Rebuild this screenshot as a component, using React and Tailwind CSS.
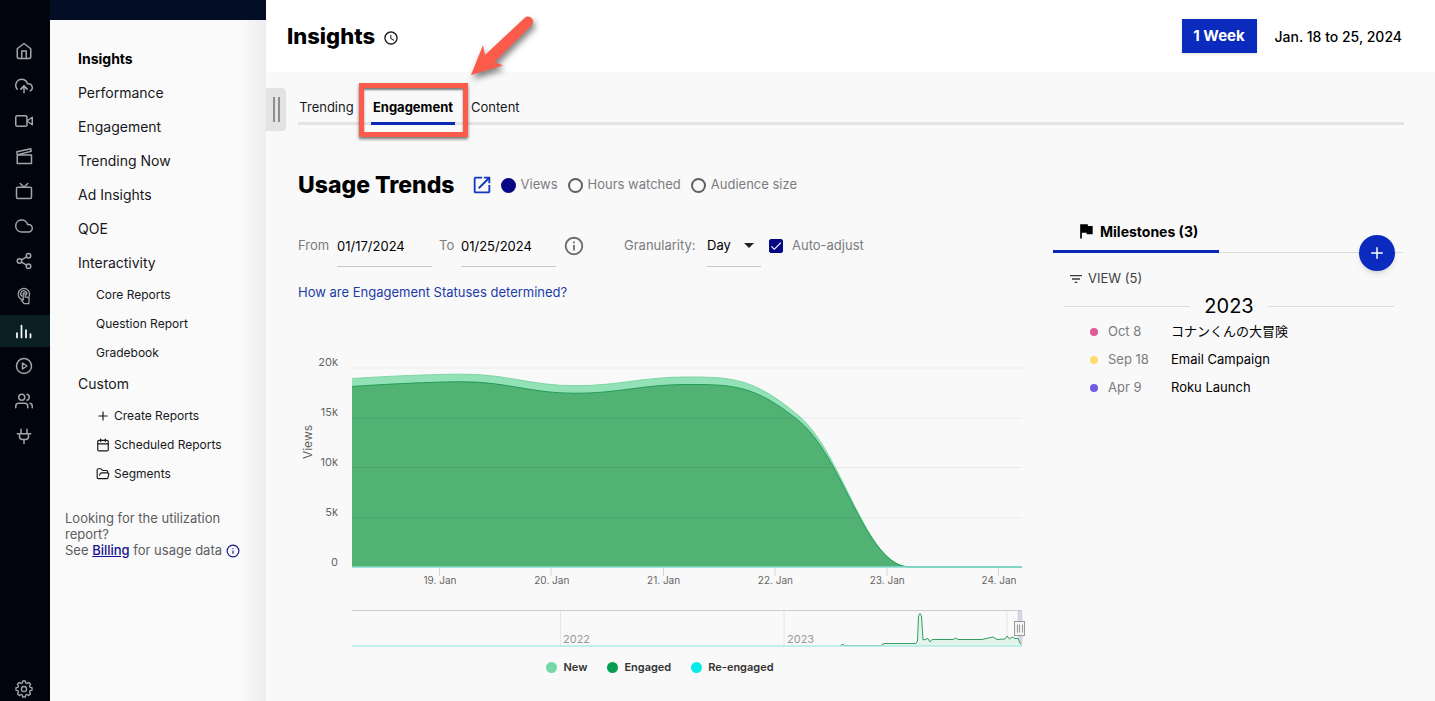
import React from "react";
import { FiHome, FiUploadCloud, FiVideo, FiTv, FiCloud, FiShare2, FiPlayCircle, FiUsers, FiPlus } from "react-icons/fi";
import { MdFlag, MdFilterList, MdOpenInNew, MdOutlineInfo, MdAccessTime, MdArrowDropDown, MdCheck } from "react-icons/md";
import { Calendar, FolderOpen, Info } from "lucide-react";

const stroke = { fill: "none", stroke: "currentColor", strokeWidth: 2, strokeLinecap: "round", strokeLinejoin: "round" };

const Clapper = () => (
  <svg viewBox="0 0 24 24" className="size-[18px]" {...stroke}>
    <path d="M3 10.5h19V22H3zM3 10.5 2.6 6.2 21 2.2l.6 3.4zM3 10.5 21.6 5.6" />
  </svg>
);

const Touch = () => (
  <svg viewBox="0 0 24 24" className="size-[18px]" {...stroke} strokeWidth={1.7}>
    <path d="M7.500 15.800A7.600 7.600 0 1 1 18.500 13.200" />
    <path d="M9.4 12.3a4 4 0 1 1 6-2" />
    <path d="M11 17.5V8.6a1.2 1.2 0 0 1 2.5 0v4.6l4 .9c1 .3 1.5.9 1.4 1.9l-.6 6.3h-6.2L8.6 17.8c-.5-1 .6-1.8 1.4-1.200z" />
  </svg>
);

const Bars = () => (
  <svg viewBox="0 0 18 18" className="size-[18px]" {...stroke} strokeWidth={1.7}>
    <path d="M2 11v4.500M6.500 3.500v12M11 8v7.500M15.500 12v3.500" />
  </svg>
);

const PlugIcon = () => (
  <svg viewBox="0 0 24 24" className="size-[18px]" {...stroke}>
    <path d="M8 3v6M16 3v6M3 9h18M6 9v3.500a4 4 0 0 0 4 4h4a4 4 0 0 0 4-4V9M12 16.500V22" />
  </svg>
);

const gearPath = (() => {
  const pts = [];
  for (let i = 0; i < 8; i++) {
    const c = (i * Math.PI) / 4;
    [[-0.27, 8.4], [-0.16, 10.8], [0.16, 10.8], [0.27, 8.4]].forEach(([a, r]) =>
      pts.push(`${(12 + r * Math.sin(c + a)).toFixed(2)} ${(12 - r * Math.cos(c + a)).toFixed(2)}`)
    );
  }
  return `M${pts.join("L")}Z`;
})();

const Gear = () => (
  <svg viewBox="0 0 24 24" className="size-[18px]" {...stroke} strokeWidth={1.8}>
    <path d={gearPath} />
    <circle cx="12" cy="12" r="3.400" />
  </svg>
);

const railItems = [
  ["Home", FiHome],
  ["Upload", FiUploadCloud],
  ["Record", FiVideo],
  ["Studio", Clapper],
  ["Live", FiTv],
  ["Cloud", FiCloud],
  ["Share", FiShare2],
  ["Interactivity", Touch],
  ["Insights", Bars],
  ["Players", FiPlayCircle],
  ["Users", FiUsers],
  ["Integrations", PlugIcon],
];

function Rail() {
  return (
    <nav aria-label="Primary" className="flex w-[50px] shrink-0 flex-col bg-[#01040c] pt-[35px] text-[#a3a5a9]">
      {railItems.map(([label, Icon]) => (
        <a
          key={label}
          href="#"
          aria-label={label}
          className={
            "mb-[3px] flex h-8 items-center justify-center pr-0.5 " +
            (label === "Insights" ? "bg-[#0a1f24] text-white" : "")
          }
        >
          <Icon className="size-[18px]" />
        </a>
      ))}
      <a href="#" aria-label="Settings" className="mt-auto mb-[3px] flex justify-center pr-0.5">
        <Gear />
      </a>
    </nav>
  );
}

function Sidebar() {
  return (
    <aside className="flex w-[216px] shrink-0 flex-col bg-[#fafafa]">
      <div className="h-5 bg-[#030d26]" />
      <div className="flex-1 bg-linear-to-r from-[#fafafa] from-88% to-[#ededef] pt-[21px] text-[14px] text-[#17181c]">
        <nav aria-label="Insights" className="flex flex-col pl-7">
          <a href="#" className="flex h-[34px] items-center font-bold text-black">Insights</a>
          {["Performance", "Engagement", "Trending Now", "Ad Insights", "QOE", "Interactivity"].map((t) => (
            <a key={t} href="#" className="flex h-[34px] items-center">{t}</a>
          ))}
          <div className="flex flex-col pt-px pl-[18px] text-[12px]">
            {["Core Reports", "Question Report", "Gradebook"].map((t) => (
              <a key={t} href="#" className="flex h-[29px] items-center">{t}</a>
            ))}
          </div>
          <a href="#" className="flex h-8 items-center">Custom</a>
          <div className="flex flex-col pt-0.5 pl-[18px] text-[12px]">
            <a href="#" className="flex h-[29px] items-center gap-1"><FiPlus className="size-3.5" />Create Reports</a>
            <a href="#" className="flex h-[29px] items-center gap-1"><Calendar className="size-3.5" />Scheduled Reports</a>
            <a href="#" className="flex h-[29px] items-center gap-1"><FolderOpen className="size-3.5" />Segments</a>
          </div>
        </nav>
        <p className="mt-[22px] pl-[15px] text-[13px] leading-4 text-[#5c5d60]">
          Looking for the utilization
          <br />
          report?
          <br />
          See <a href="#" className="font-medium text-[#14148c] underline">Billing</a> for usage data{" "}
          <Info className="inline size-3.5 text-[#14148c]" />
        </p>
      </div>
    </aside>
  );
}

function Callout() {
  return (
    <>
      <span className="pointer-events-none absolute -top-[5px] -right-[13px] -bottom-[15px] -left-3 border-5 border-[#fb5b4b] shadow-[0_2px_3px_rgba(0,0,0,0.55),inset_0_2px_2px_rgba(0,0,0,0.5)]" />
      <svg
        aria-hidden="true"
        viewBox="0 0 80 80"
        className="pointer-events-none absolute -top-[78px] left-[92px] size-20 drop-shadow-[2px_4px_3px_rgba(0,0,0,0.5)]"
      >
        <path d="M8 65 20 35 22 45 61.500 8A5 5 0 0 1 68.500 15.500L31.500 52 40 55.500Z" fill="#fb5b4b" />
      </svg>
    </>
  );
}

function Tabs() {
  return (
    <div className="flex items-start pt-4">
      <button aria-label="Toggle sidebar" className="flex h-[43px] w-5 items-center justify-center gap-[3px] rounded-r-sm bg-[#e3e3e3]">
        <span className="h-[25px] w-0.5 bg-[#8e8e8e]" />
        <span className="h-[25px] w-0.5 bg-[#8e8e8e]" />
      </button>
      <div role="tablist" className="mr-[31px] ml-3 flex h-[37px] flex-1 gap-4 border-b-3 border-[#e4e4e4] text-[13px]">
        <button role="tab" className="w-[57px] pt-[5px]">Trending</button>
        <button role="tab" aria-selected="true" className="relative -mb-[3px] w-[84px] border-b-3 border-[#0a28b4] pt-[5px] font-bold text-black">
          Engagement
          <Callout />
        </button>
        <button role="tab" className="pt-[5px]">Content</button>
      </div>
    </div>
  );
}

// Cubic smoothing through the samples: local extremes stay flat, other points share one tangent.
function spline(p) {
  let d = `M${p[0][0]} ${p[0][1]}`;
  let prev = p[0];
  for (let i = 1; i < p.length; i++) {
    const [x, y] = p[i];
    let left = [x, y];
    let right = [x, y];
    if (i < p.length - 1) {
      const [lx, ly] = p[i - 1];
      const [rx, ry] = p[i + 1];
      left = [(1.5 * x + lx) / 2.5, (1.5 * y + ly) / 2.5];
      right = [(1.5 * x + rx) / 2.5, (1.5 * y + ry) / 2.5];
      const fix = ((right[1] - left[1]) * (right[0] - x)) / (right[0] - left[0]) + y - right[1];
      left[1] += fix;
      right[1] += fix;
      if ((y - ly) * (ry - y) <= 0) {
        left[1] = y;
        right[1] = y;
      }
    }
    d += `C${prev[0]} ${prev[1]} ${left[0]} ${left[1]} ${x} ${y}`;
    prev = right;
  }
  return d;
}

const engaged = spline([[54, 36.5], [165, 31.8], [277, 43.3], [389, 34.5], [501, 71], [612, 217], [724, 217]]);
const fresh = spline([[54, 28.5], [165, 24.2], [277, 35.7], [389, 27], [501, 66], [612, 217], [724, 217]]);
const history =
  "M542 296 544 294.500 547 295.500H583L586 293.500H618L619.500 291 620.500 266 622 263.500 623.500 266 625 290 630 288.500 632 292 634 289.500H655L658 288 660 289.500H684L695 287 699 289.500 707 289 709 286 711.500 289 714 287 717 288.500H720L722.500 294";

function Chart() {
  return (
    <figure className="mt-12">
      <svg viewBox="0 0 728 300" role="img" aria-label="Views by day" className="-mr-1 block w-[calc(100%+4px)]">
        <path d={`${fresh}V217H54Z`} fill="#93e1b7" />
        <path d={fresh} fill="none" stroke="#7dd6a4" />
        <path d={`${engaged}V217H54Z`} fill="#51b274" />
        <path d={engaged} fill="none" stroke="#249b57" />
        <g stroke="#000" strokeOpacity="0.060">
          <path d="M54 18H724M54 68H724M54 117.500H724M54 168H724" />
        </g>
        <path d="M54 217H724" stroke="#86dad0" strokeWidth="1.500" />
        <path d="M141.500 218v8M253 218v8M365.500 218v8M477 218v8M589 218v8M700.500 218v8" stroke="#ccd6eb" />
        <g fill="#666" fontSize="11" textAnchor="end">
          {["20k", "15k", "10k", "5k", "0"].map((t, i) => (
            <text key={t} x="40" y={16 + i * 50}>{t}</text>
          ))}
        </g>
        <text transform="translate(13.500 92) rotate(-90)" textAnchor="middle" fontSize="12" fill="#666">Views</text>
        <g fill="#666" fontSize="10" textAnchor="middle">
          {[19, 20, 21, 22, 23, 24].map((day, i) => (
            <text key={day} x={142 + i * 111.8} y="234">{day}. Jan</text>
          ))}
        </g>
        <path d="M54 260.500H724" stroke="#ccc" />
        <path d="M262.500 261v35M486 261v35M709 261v35" stroke="#e6e6e6" />
        <path d="M720 261H724V296H720Z" fill="#d3d6e6" stroke="#c6c8d2" strokeWidth="0.500" />
        <path d={`${history}V296H542Z`} fill="#e3f5ea" />
        <path d={history} fill="none" stroke="#349e62" />
        <path d="M54 296H724" stroke="#aee9e6" strokeWidth="1.500" />
        <g fill="#999" fontSize="11">
          <text x="265" y="293">2022</text>
          <text x="489" y="293">2023</text>
        </g>
        <rect x="716.500" y="271.500" width="10" height="14" fill="#f2f2f2" stroke="#999" />
        <path d="M719.500 274.500v8M721.500 274.500v8M724.500 274.500v8" stroke="#999" />
      </svg>
      <figcaption className="flex h-[34px] items-center justify-center gap-5 text-[11px] font-semibold text-[#333]">
        <span className="flex items-center gap-1.5"><i className="size-[11px] rounded-full bg-[#76d9a5]" />New</span>
        <span className="flex items-center gap-1.5"><i className="size-[11px] rounded-full bg-[#069e50]" />Engaged</span>
        <span className="flex items-center gap-1.5"><i className="size-[11px] rounded-full bg-[#06ebe6]" />Re-engaged</span>
      </figcaption>
    </figure>
  );
}

function Filters() {
  return (
    <div className="mt-6 flex h-[42px] items-center text-[13px] text-[#7b7c7f]">
      <label htmlFor="from" className="w-[39px]">From</label>
      <input id="from" defaultValue="01/17/2024" className="h-full w-[95px] border-b border-[#c8c8c8] text-black outline-none" />
      <label htmlFor="to" className="w-[29px] pl-[7px]">To</label>
      <input id="to" defaultValue="01/25/2024" className="h-full w-[95px] border-b border-[#c8c8c8] text-black outline-none" />
      <MdOutlineInfo className="ml-[7px] size-[22px] text-[#6e6e6e]" />
      <label htmlFor="granularity" className="ml-[39px] w-[83px]">Granularity:</label>
      <span className="relative h-full">
        <select id="granularity" className="h-full w-[54px] appearance-none border-b border-[#c8c8c8] text-black outline-none">
          <option>Day</option>
          <option>Week</option>
          <option>Month</option>
        </select>
        <MdArrowDropDown className="pointer-events-none absolute top-2 right-0 size-6 text-[#222]" />
      </span>
      <label className="ml-2 flex items-center gap-[9px]">
        <span className="relative flex size-3.5">
          <input type="checkbox" defaultChecked className="peer size-3.5 appearance-none rounded-xs border border-[#555] checked:border-[#070785] checked:bg-[#070785]" />
          <MdCheck className="pointer-events-none absolute top-0 left-0 hidden size-3.5 text-white peer-checked:block" />
        </span>
        Auto-adjust
      </label>
    </div>
  );
}

const milestones = [
  ["Oct 8", "コナンくんの大冒険", "bg-[#de5b98]"],
  ["Sep 18", "Email Campaign", "bg-[#ffdb6e]"],
  ["Apr 9", "Roku Launch", "bg-[#6f5ce0]"],
];

function Milestones() {
  return (
    <section className="w-[350px] shrink-0 pt-[81px]">
      <div className="relative flex h-[41px] border-b border-[#dcdcdc]">
        <h3 className="-mb-px flex w-[166px] items-center gap-1 border-b-3 border-[#0a28b4] pl-[23px] text-[14px] font-bold text-black">
          <MdFlag className="size-5" />
          Milestones (3)
        </h3>
        <button aria-label="Add milestone" className="absolute right-2 -bottom-[19px] flex size-9 items-center justify-center rounded-full bg-[#0a2bbd] text-white shadow-md">
          <FiPlus className="size-[18px]" />
        </button>
      </div>
      <button className="mt-4 ml-[15px] flex h-5 items-center gap-1 text-[13px] text-[#3c3d40]">
        <MdFilterList className="size-4" />
        VIEW (5)
      </button>
      <div className="mt-[3px] mr-[9px] ml-[11px] flex h-7 items-center gap-3.5 text-[20px] text-black before:h-px before:flex-1 before:bg-[#dcdcdc] after:h-px after:flex-1 after:bg-[#dcdcdc]">
        2023
      </div>
      <ul className="-mt-0.5 pl-[37px]">
        {milestones.map(([date, name, dot]) => (
          <li key={date} className="flex h-7 items-center text-[13px]">
            <i className={`size-2 rounded-full ${dot}`} />
            <span className="w-[73px] pl-2.5 text-[#7b7c7f]">{date}</span>
            <span className="text-black">{name}</span>
          </li>
        ))}
      </ul>
    </section>
  );
}

export default function App() {
  return (
    <div className="flex min-h-screen bg-[#f9f9f9] font-['Inter','Noto_Sans_CJK_JP',sans-serif] text-[#17181c]">
      <Rail />
      <Sidebar />
      <main className="min-w-0 flex-1">
        <header className="flex h-[72px] items-center bg-white pr-[33px] pl-[21px]">
          <h1 className="text-[22px] font-extrabold text-black">Insights</h1>
          <MdAccessTime className="mt-1 ml-2 size-4" />
          <button className="ml-auto h-[34px] w-[75px] bg-[#0a2bbd] text-[15px] font-bold text-white shadow">1 Week</button>
          <span className="ml-[18px] text-[14px] font-medium text-black">Jan. 18 to 25, 2024</span>
        </header>
        <Tabs />
        <div className="flex gap-[31px] pr-8 pl-8">
          <div className="min-w-0 flex-1 pt-[38px]">
            <div className="flex h-8 items-center text-[13px] text-[#7b7c7f]">
              <h2 className="text-[23px] font-extrabold text-black">Usage Trends</h2>
              <a href="#" aria-label="Open report" className="ml-4"><MdOpenInNew className="size-[22px] text-[#1438bd]" /></a>
              <div role="radiogroup" aria-label="Metric" className="ml-2 flex gap-2.5">
                {["Views", "Hours watched", "Audience size"].map((t, i) => (
                  <label key={t} className="flex items-center gap-[5px]">
                    <input type="radio" name="metric" defaultChecked={i === 0} className="size-[15px] appearance-none rounded-full border-2 border-[#5f6062] checked:border-[#070785] checked:bg-[#070785]" />
                    {t}
                  </label>
                ))}
              </div>
            </div>
            <Filters />
            <a href="#" className="mt-[15px] block text-[13px] leading-5 text-[#1b3ba8]">How are Engagement Statuses determined?</a>
            <Chart />
          </div>
          <Milestones />
        </div>
      </main>
    </div>
  );
}
